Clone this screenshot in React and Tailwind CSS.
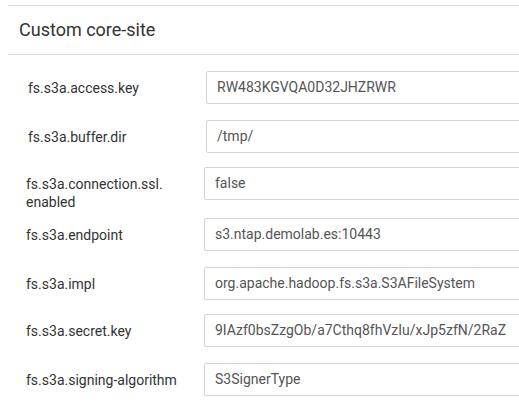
import React from "react";

const rows = [
  { label: "fs.s3a.access.key", value: "RW483KGVQA0D32JHZRWR", mt: "mt-[16px]", shift: true },
  { label: "fs.s3a.buffer.dir", value: "/tmp/", mt: "mt-[16px]", shift: true },
  { label: ["fs.s3a.connection.ssl.", "enabled"], value: "false", mt: "mt-[14px]" },
  { label: "fs.s3a.endpoint", value: "s3.ntap.demolab.es:10443", mt: "mt-[7px]" },
  { label: "fs.s3a.impl", value: "org.apache.hadoop.fs.s3a.S3AFileSystem", mt: "mt-[16px]" },
  { label: "fs.s3a.secret.key", value: "9IAzf0bsZzgOb/a7Cthq8fhVzIu/xJp5zfN/2RaZ", mt: "mt-[14px]" },
  { label: "fs.s3a.signing-algorithm", value: "S3SignerType", mt: "mt-[16px]" },
];

export default function App() {
  return (
    <div className="w-[519px] h-[408px] overflow-hidden bg-white" style={{ fontFamily: "Roboto, 'Liberation Sans', sans-serif" }}>
      <div className="ml-[8px] mt-[5px] w-[530px] border-t border-[#dcdcdc]">
        <div className="h-[49px] border-b border-[#dcdcdc] flex items-center pl-[11px] text-[18px] text-[#333] pb-[1px]">
          Custom core-site
        </div>
        {rows.map((r, i) => (
          <div key={i} className={`flex items-start ${r.mt} ${r.shift ? "pl-[2px]" : ""}`}>
            <div className="w-[196px] pl-[18px] pt-[8px] text-[14px] leading-[18px] text-[#333] shrink-0">
              {Array.isArray(r.label) ? (
                <>
                  <div>{r.label[0]}</div>
                  <div>{r.label[1]}</div>
                </>
              ) : (
                r.label
              )}
            </div>
            <div className="h-[33px] flex-1 border border-[#d4d4d4] rounded-[2px] flex items-center pl-[10px] text-[14px] text-[#555] whitespace-nowrap">
              {r.value}
            </div>
          </div>
        ))}
      </div>
    </div>
  );
}
